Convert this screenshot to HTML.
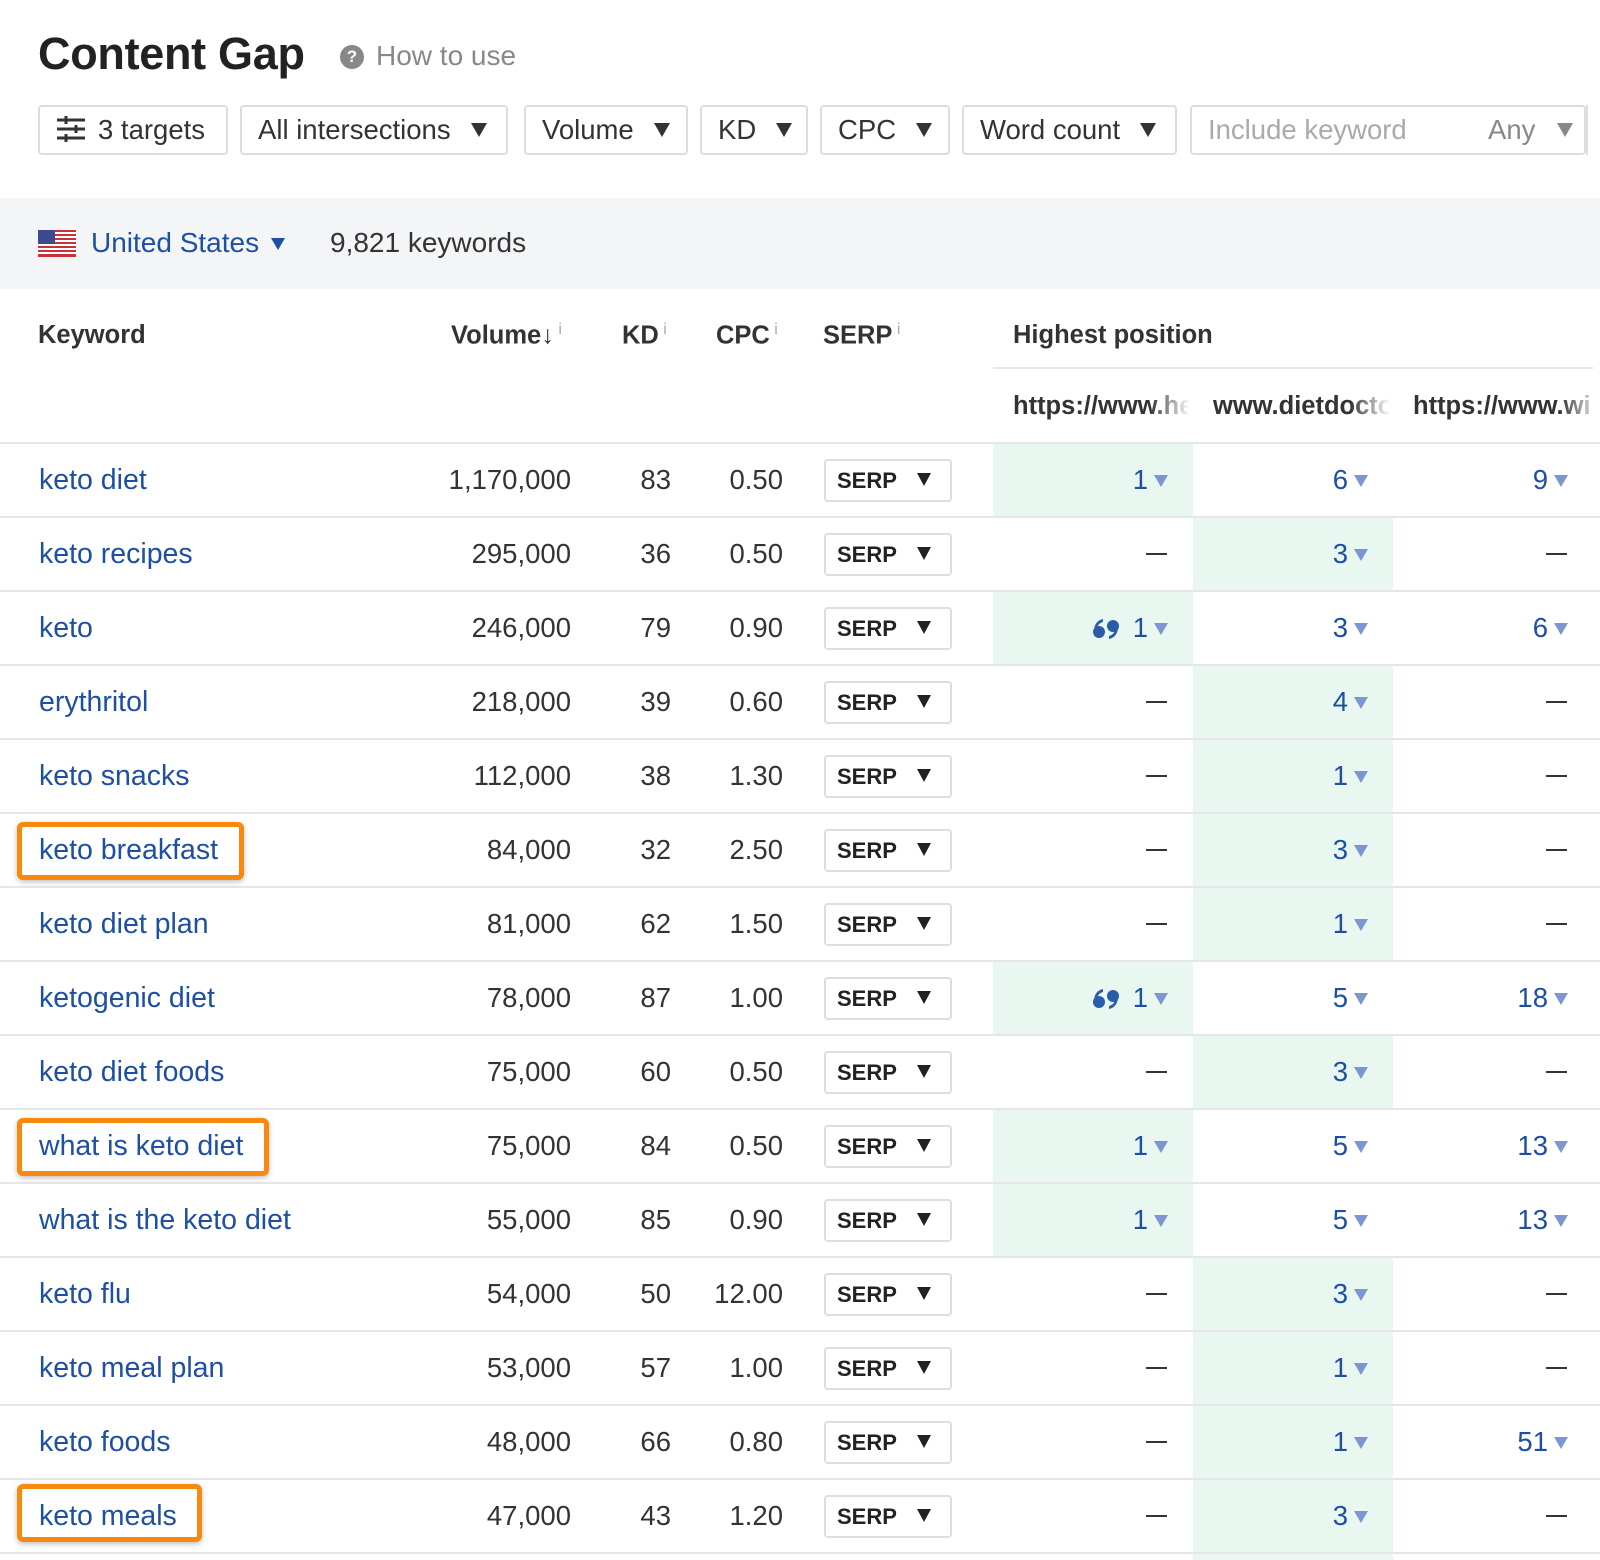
<!DOCTYPE html>
<html><head><meta charset="utf-8"><style>
*{box-sizing:border-box;margin:0;padding:0}
body{width:1600px;height:1558px;background:#fff;font-family:"Liberation Sans",Arial,sans-serif;color:#333;position:relative;overflow:hidden}
.abs{position:absolute}
h1{position:absolute;left:38px;top:28px;font-size:45px;font-weight:bold;color:#222;letter-spacing:-0.3px}
.how{position:absolute;left:340px;top:40px;font-size:28px;color:#888}
.how .q{display:inline-block;width:24px;height:24px;border-radius:50%;background:#888;color:#fff;font-size:17px;font-weight:bold;text-align:center;line-height:24px;vertical-align:3px;margin-right:12px}
.btn{position:absolute;top:105px;height:50px;border:2px solid #ddd;border-radius:4px;font-size:27.5px;color:#333;padding:0 16px;line-height:46px;white-space:nowrap}
.tri{display:inline-block;width:0;height:0;border-left:8px solid transparent;border-right:8px solid transparent;border-top:14px solid #333;margin-left:20px;vertical-align:2px}
.band{position:absolute;left:0;top:198px;width:1600px;height:91px;background:#f4f5f7}
.hd{position:absolute;font-size:25.5px;font-weight:bold;color:#333}
.hd sup{font-weight:normal;color:#aaa;font-size:16px}
.row{position:absolute;left:0;width:1600px;height:74px;border-top:2px solid #e6e6e6}
.c{position:absolute;top:0;height:72px;line-height:72px;font-size:27.5px}
.kw{left:39px;color:#1d4fa3;font-size:28.5px}
.r{text-align:right}
.g{background:#e9f7f1}
.serp{position:absolute;left:824px;top:15px;width:128px;height:43px;border:2px solid #ddd;border-radius:4px;font-size:22px;font-weight:bold;line-height:39px;padding-left:11px;color:#222}
.serp .tri{border-top-color:#222;border-left-width:7px;border-right-width:7px;border-top-width:13px;margin-left:20px}
.pos{color:#1d4fa3}
.pt{display:inline-block;width:0;height:0;border-left:7px solid transparent;border-right:7px solid transparent;border-top:12px solid #7d95d1;margin-left:6px;vertical-align:2px}
.dash{display:inline-block;width:21px;height:2px;background:#333;vertical-align:8px;margin-right:1px}
.hl{position:absolute;border:5px solid #f7890f;border-radius:6px;box-shadow:0 2px 6px rgba(0,0,0,.25)}
.qt{display:inline-block;vertical-align:-2px;margin-right:14px}
</style></head><body>
<h1>Content Gap</h1>
<div class="how"><span class="q">?</span>How to use</div>

<div class="btn" style="left:38px;width:190px"><svg width="30" height="26" viewBox="0 0 30 26" style="vertical-align:-3px;margin-right:12px"><g stroke="#333" stroke-width="3"><line x1="1" y1="4" x2="29" y2="4"/><line x1="1" y1="13" x2="29" y2="13"/><line x1="1" y1="22" x2="29" y2="22"/><line x1="10" y1="0" x2="10" y2="8"/><line x1="20" y1="9" x2="20" y2="17"/><line x1="10" y1="18" x2="10" y2="26"/></g></svg>3 targets</div>
<div class="btn" style="left:240px;width:268px">All intersections<span class="tri"></span></div>
<div class="btn" style="left:524px;width:164px">Volume<span class="tri"></span></div>
<div class="btn" style="left:700px;width:108px">KD<span class="tri"></span></div>
<div class="btn" style="left:820px;width:130px">CPC<span class="tri"></span></div>
<div class="btn" style="left:962px;width:215px">Word count<span class="tri"></span></div>
<div class="btn" style="left:1190px;width:396px;color:#aaa">Include keyword<span style="position:absolute;left:296px;color:#888">Any<span class="tri" style="border-top-color:#888;margin-left:22px"></span></span></div>
<div class="abs" style="left:1586px;top:105px;width:14px;height:50px;border-left:2px solid #ddd"></div>

<div class="band"></div>
<svg class="abs" style="left:38px;top:230px" width="38" height="27" viewBox="0 0 38 27"><rect width="38" height="27" fill="#fff"/><g fill="#c9323a"><rect y="0" width="38" height="2"/><rect y="4" width="38" height="2"/><rect y="8" width="38" height="2"/><rect y="12" width="38" height="2"/><rect y="16" width="38" height="2"/><rect y="20" width="38" height="2"/><rect y="24" width="38" height="3"/></g><rect width="17" height="14" fill="#3c4a8e"/></svg>
<div class="abs" style="left:91px;top:227px;font-size:28px;color:#1d4fa3">United States<span class="tri" style="border-top-color:#1d4fa3;border-left-width:7px;border-right-width:7px;border-top-width:12px;margin-left:12px"></span></div>
<div class="abs" style="left:330px;top:227px;font-size:28px;color:#333">9,821 keywords</div>

<div class="hd" style="left:38px;top:321px">Keyword</div>
<div class="hd" style="left:451px;top:321px">Volume&#8595;<sup> i</sup></div>
<div class="hd" style="left:622px;top:321px">KD<sup> i</sup></div>
<div class="hd" style="left:716px;top:321px">CPC<sup> i</sup></div>
<div class="hd" style="left:823px;top:321px">SERP<sup> i</sup></div>
<div class="hd" style="left:1013px;top:321px">Highest position</div>
<div class="abs" style="left:993px;top:367px;width:600px;border-top:2px solid #e6e6e6"></div>
<div class="hd" style="left:1013px;top:392px;width:176px;overflow:hidden;white-space:nowrap">https://www.healthline</div>
<div class="hd" style="left:1213px;top:392px;width:176px;overflow:hidden;white-space:nowrap">www.dietdoctor</div>
<div class="hd" style="left:1413px;top:392px;width:176px;overflow:hidden;white-space:nowrap">https://www.wiki</div>
<div class="abs" style="left:1150px;top:390px;width:40px;height:40px;background:linear-gradient(90deg,rgba(255,255,255,0),#fff)"></div>
<div class="abs" style="left:1350px;top:390px;width:40px;height:40px;background:linear-gradient(90deg,rgba(255,255,255,0),#fff)"></div>
<div class="abs" style="left:1560px;top:390px;width:40px;height:40px;background:linear-gradient(90deg,rgba(255,255,255,0),#fff)"></div>

<div id="rows"></div>
<script>
var d=[["keto diet","1,170,000",83,"0.50",["1","6","9"],0],
["keto recipes","295,000",36,"0.50",["","3",""],1],
["keto","246,000",79,"0.90",["q1","3","6"],0],
["erythritol","218,000",39,"0.60",["","4",""],1],
["keto snacks","112,000",38,"1.30",["","1",""],1],
["keto breakfast","84,000",32,"2.50",["","3",""],1],
["keto diet plan","81,000",62,"1.50",["","1",""],1],
["ketogenic diet","78,000",87,"1.00",["q1","5","18"],0],
["keto diet foods","75,000",60,"0.50",["","3",""],1],
["what is keto diet","75,000",84,"0.50",["1","5","13"],0],
["what is the keto diet","55,000",85,"0.90",["1","5","13"],0],
["keto flu","54,000",50,"12.00",["","3",""],1],
["keto meal plan","53,000",57,"1.00",["","1",""],1],
["keto foods","48,000",66,"0.80",["","1","51"],1],
["keto meals","47,000",43,"1.20",["","3",""],1]];
var q='<svg class="qt" width="26" height="20" viewBox="0 0 26 20"><g fill="#2a5ca8"><circle cx="6" cy="13" r="6"/><path d="M1 12 C1 5 5 1 10 0 L10 3 C6 4 4 7 4 11Z"/><circle cx="20" cy="7" r="6"/><path d="M25 8 C25 15 21 19 16 20 L16 17 C20 16 22 13 22 9Z"/></g></svg>';
var h="";var cx=[993,1193,1393];var cr=[1168,1368,1568];
d.forEach(function(r,i){var t=442+i*74;h+='<div class="row" style="top:'+t+'px">';
h+='<div class="c kw">'+r[0]+'</div>';
h+='<div class="c r" style="left:400px;width:171px">'+r[1]+'</div>';
h+='<div class="c r" style="left:600px;width:71px">'+r[2]+'</div>';
h+='<div class="c r" style="left:700px;width:83px">'+r[3]+'</div>';
h+='<div class="serp">SERP<span class="tri"></span></div>';
for(var j=0;j<3;j++){var v=r[4][j];var g=(j==r[5]);
h+='<div class="c r'+(g?' g':'')+'" style="left:'+cx[j]+'px;width:200px"><span style="position:absolute;right:'+(cx[j]+200-cr[j])+'px">';
if(v==""){h+='<span class="dash"></span>';}else{if(v[0]=="q"){h+=q;v=v.slice(1);}h+='<span class="pos">'+v+'</span><span class="pt"></span>';}
h+='</span></div>';}
h+='</div>';});
h+='<div class="row" style="top:1552px;height:6px"><div class="g abs" style="left:1193px;top:0;width:200px;height:6px"></div></div>';
h+='<div class="hl" style="left:17px;top:822px;width:227px;height:58px"></div>';
h+='<div class="hl" style="left:17px;top:1118px;width:252px;height:58px"></div>';
h+='<div class="hl" style="left:17px;top:1484px;width:185px;height:58px"></div>';
document.getElementById("rows").innerHTML=h;
</script>
</body></html>
